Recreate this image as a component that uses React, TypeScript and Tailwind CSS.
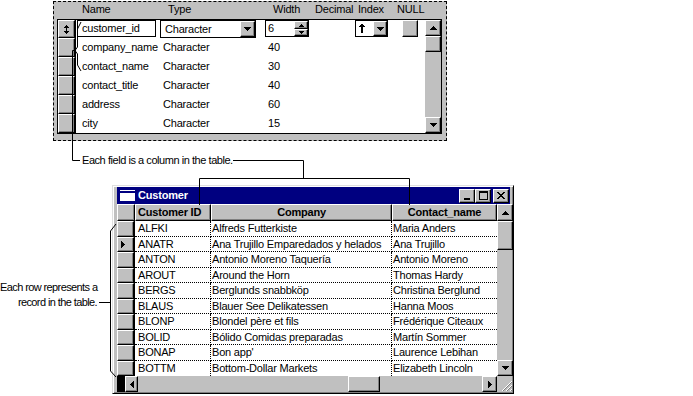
import React from 'react';

const raised =
  'bg-[#c0c0c0] border border-t-white border-l-white border-r-black border-b-black shadow-[inset_-1px_-1px_0_#808080]';

function Btn({ className = '', children }: { className?: string; children?: React.ReactNode }) {
  return <div className={`flex shrink-0 items-center justify-center ${raised} ${className}`}>{children}</div>;
}

type Dir = 'up' | 'down' | 'left' | 'right';

// pixel triangles, win95 style
function Tri({ dir }: { dir: Dir }) {
  if (dir === 'up')
    return (
      <svg width="7" height="4" shapeRendering="crispEdges">
        <path d="M3 0h1v1h1v1h1v1h1v1H0V3h1V2h1V1h1V0z" />
      </svg>
    );
  if (dir === 'down')
    return (
      <svg width="7" height="4" shapeRendering="crispEdges">
        <path d="M0 0h7v1h-1v1h-1v1h-1v1H3V3H2V2H1V1H0z" />
      </svg>
    );
  if (dir === 'right')
    return (
      <svg width="4" height="7" shapeRendering="crispEdges">
        <path d="M0 0h1v1h1v1h1v1h1v1H3v1H2v1H1v1H0z" />
      </svg>
    );
  return (
    <svg width="4" height="7" shapeRendering="crispEdges">
      <path d="M3 0h1v7H3V6H2V5H1V4H0V3h1V2h1V1h1z" />
    </svg>
  );
}

function SmallTri({ dir }: { dir: 'up' | 'down' }) {
  return (
    <svg width="5" height="3" shapeRendering="crispEdges">
      {dir === 'up' ? <path d="M2 0h1v1h1v1h1v1H0V2h1V1h1z" /> : <path d="M0 0h5v1H4v1H3v1H2V2H1V1H0z" />}
    </svg>
  );
}

const fields = [
  { name: 'company_name', width: '40', h: 'h-[19px]' },
  { name: 'contact_name', width: '30', h: 'h-[19px]' },
  { name: 'contact_title', width: '40', h: 'h-[19px]' },
  { name: 'address', width: '60', h: 'h-[19px]' },
  { name: 'city', width: '15', h: 'h-[19px]' },
];

function FieldPanel() {
  return (
    <div className="ml-[53px] mt-px h-[140px] w-[394px] border border-dashed border-black bg-[#c0c0c0]">
      <div className="flex h-[17px] pl-[28px] leading-[14px]">
        <span className="w-[86px]">Name</span>
        <span className="w-[105px]">Type</span>
        <span className="w-[42px]">Width</span>
        <span className="w-[43px]">Decimal</span>
        <span className="w-[39px]">Index</span>
        <span>NULL</span>
      </div>
      <div className="ml-[3px] flex h-[115px] w-[385px] border border-black bg-white">
        {/* row selectors */}
        <div className="flex w-[18px] flex-col border-r border-black bg-[#c0c0c0]">
          <Btn className="h-[18px] w-full">
            <svg width="5" height="9" shapeRendering="crispEdges">
              <path d="M2 0h1v1h1v1h1v1H3v3h2v1H4v1H3v1H2V8H1V7H0V6h2V3H0V2h1V1h1z" />
            </svg>
          </Btn>
          {fields.map((f) => (
            <Btn key={f.name} className={`${f.h} w-full`} />
          ))}
        </div>

        <div className="flex w-[349px] flex-col">
          <div className="flex h-[18px] items-start">
            <div className="w-[84px] pl-px">
              <div className="h-[17px] w-[79px] border border-black pl-[4px] leading-[15px]">customer_id</div>
            </div>
            <div className="w-[105px]">
              <div className="flex h-[18px] w-[96px] border border-black">
                <span className="pl-[4px] leading-[16px]">Character</span>
                <Btn className="ml-auto h-[16px] w-[15px]">
                  <Tri dir="down" />
                </Btn>
              </div>
            </div>
            <div className="w-[49px]">
              <div className="flex h-[17px] w-[44px] border border-black">
                <span className="pl-[2px] leading-[15px]">6</span>
                <div className="ml-auto flex w-[14px] flex-col">
                  <Btn className="h-[8px] w-full">
                    <SmallTri dir="up" />
                  </Btn>
                  <Btn className="h-[7px] w-full">
                    <SmallTri dir="down" />
                  </Btn>
                </div>
              </div>
            </div>
            <div className="w-[41px]" />
            <div className="w-[42px]">
              <div className="flex h-[17px] w-[33px] items-center border border-black">
                <svg className="ml-[3px]" width="6" height="9" shapeRendering="crispEdges">
                  <path d="M2 0h2v1h1v1h1v1H4v6H2V3H0V2h1V1h1z" />
                </svg>
                <Btn className="ml-auto h-[15px] w-[14px]">
                  <Tri dir="down" />
                </Btn>
              </div>
            </div>
            <div className="w-[28px] pl-[5px]">
              <Btn className="h-[17px] w-[16px]" />
            </div>
          </div>
          {fields.map((f) => (
            <div key={f.name} className={`flex ${f.h} items-center`}>
              <span className="w-[84px] pl-[6px]">{f.name}</span>
              <span className="w-[105px] pl-[3px]">Character</span>
              <span className="w-[49px] pl-[3px]">{f.width}</span>
            </div>
          ))}
        </div>

        <div className="flex w-[16px] flex-col bg-[#c0c0c0]">
          <Btn className="h-[16px] w-full">
            <Tri dir="up" />
          </Btn>
          <Btn className="h-[16px] w-full" />
          <div className="flex-1" />
          <Btn className="h-[16px] w-full">
            <Tri dir="down" />
          </Btn>
        </div>
      </div>
    </div>
  );
}

const customers = [
  ['ALFKI', 'Alfreds Futterkiste', 'Maria Anders'],
  ['ANATR', 'Ana Trujillo Emparedados y helados', 'Ana Trujillo'],
  ['ANTON', 'Antonio Moreno Taquería', 'Antonio Moreno'],
  ['AROUT', 'Around the Horn', 'Thomas Hardy'],
  ['BERGS', 'Berglunds snabbköp', 'Christina Berglund'],
  ['BLAUS', 'Blauer See Delikatessen', 'Hanna Moos'],
  ['BLONP', 'Blondel père et fils', 'Frédérique Citeaux'],
  ['BOLID', 'Bólido Comidas preparadas', 'Martín Sommer'],
  ['BONAP', "Bon app'", 'Laurence Lebihan'],
  ['BOTTM', 'Bottom-Dollar Markets', 'Elizabeth Lincoln'],
];

function CustomerWindow() {
  return (
    <div className="flex h-[209px] w-[402px] flex-col border border-t-[#dfdfdf] border-l-[#dfdfdf] border-r-black border-b-black bg-[#c0c0c0] pb-px pl-[4px] pt-px shadow-[inset_1px_1px_0_white,inset_-1px_-1px_0_#808080]">
      {/* title bar */}
      <div className="mr-[3px] flex h-[17px] shrink-0 items-center bg-[#000080]">
        <div className="ml-[3px] h-[11px] w-[15px] bg-white pt-px">
          <div className="h-[2px] bg-[#000080]" />
        </div>
        <span className="ml-[3px] font-bold text-white">Customer</span>
        <div className="ml-auto mr-px flex items-center">
          <Btn className="h-[14px] w-[16px] items-end pb-[2px]">
            <svg width="6" height="2">
              <rect width="6" height="2" />
            </svg>
          </Btn>
          <Btn className="h-[14px] w-[16px]">
            <svg width="9" height="9" shapeRendering="crispEdges">
              <path d="M0 0h9v9H0z M1 2v6h7V2z" fillRule="evenodd" />
            </svg>
          </Btn>
          <Btn className="ml-[2px] h-[14px] w-[16px]">
            <svg width="8" height="7" shapeRendering="crispEdges">
              <path d="M0 0h2v1h1v1h2V1h1V0h2v1H7v1H6v1H5v1h1v1h1v1h1v1H6V6H5V5H3v1H2v1H0V6h1V5h1V4h1V3H2V2H1V1H0z" />
            </svg>
          </Btn>
        </div>
      </div>

      {/* grid */}
      <div className="flex h-[172px] shrink-0">
        <div className="flex flex-1 flex-col">
          <div className="flex h-[17px] font-bold">
            <Btn className="h-full w-[18px] border-r-black" />
            <div className={`${raised} h-full w-[76px] pl-[2px] leading-[15px]`}>Customer ID</div>
            <div className={`${raised} h-full w-[181px] text-center leading-[15px]`}>Company</div>
            <div className={`${raised} h-full w-[105px] text-center leading-[15px]`}>Contact_name</div>
          </div>
          {customers.map(([id, company, contact], i) => {
            const last = i === customers.length - 1;
            return (
              <div key={id} className={`flex ${i % 2 === 0 ? 'h-[16px]' : 'h-[15px]'}`}>
                <div className="flex h-full w-[18px] items-center border-r border-black">
                  <Btn className="h-full w-full justify-start pl-[3px]">{id === 'ANATR' && <Tri dir="right" />}</Btn>
                </div>
                <div
                  className={`flex w-[76px] items-center border-r border-dotted border-black bg-white pl-[3px] ${last ? '' : 'border-b'}`}
                >
                  {id}
                </div>
                <div
                  className={`flex w-[181px] items-center overflow-hidden whitespace-nowrap border-r border-dotted border-black bg-white pl-px ${last ? '' : 'border-b'}`}
                >
                  {company}
                </div>
                <div
                  className={`flex w-[105px] items-center whitespace-nowrap border-dotted border-black bg-white pl-px ${last ? '' : 'border-b'}`}
                >
                  {contact}
                </div>
              </div>
            );
          })}
        </div>
        <div className="flex w-[16px] flex-col">
          <Btn className="h-[17px] w-full">
            <Tri dir="up" />
          </Btn>
          <Btn className="h-[29px] w-full" />
          <div className="flex-1" />
          <Btn className="h-[16px] w-full">
            <Tri dir="down" />
          </Btn>
        </div>
      </div>

      {/* horizontal scrollbar */}
      <div className="flex h-[16px] shrink-0">
        <div className="w-[8px] bg-black" />
        <Btn className="h-full w-[13px]">
          <Tri dir="left" />
        </Btn>
        <div className="flex flex-1">
          <Btn className="ml-[210px] h-full w-[32px]" />
        </div>
        <Btn className="h-full w-[15px]">
          <Tri dir="right" />
        </Btn>
        <div className="flex w-[16px] items-end justify-end">
          <svg width="12" height="12" shapeRendering="crispEdges">
            <path d="M11 1L1 11 M11 5L5 11 M11 9L9 11" stroke="white" />
            <path d="M11 2L2 11 M11 6L6 11 M11 10L10 11" stroke="#808080" />
          </svg>
        </div>
      </div>
    </div>
  );
}

export default function App() {
  return (
    <div className="relative h-[396px] w-[693px] overflow-hidden bg-white font-['Liberation_Sans',Arial,sans-serif] text-[11px] tracking-[-0.2px] text-black">
      <FieldPanel />

      <div className="h-[44px] whitespace-nowrap pl-[82px] pt-[12px] leading-[14px] tracking-[-0.45px]">
        Each field is a column in the table.
      </div>

      <div className="flex">
        <div className="w-[112px] whitespace-nowrap pt-[95px] text-right leading-[15px] tracking-[-0.6px]">
          <div className="pr-[19px]">Each row represents a</div>
          <div className="pr-[15px]">record in the table.</div>
        </div>
        <CustomerWindow />
      </div>

      {/* callout leader lines */}
      <svg className="pointer-events-none absolute left-0 top-0" width="693" height="396" fill="none" stroke="black">
        <path d="M81 22 L77.5 29 V47 L75 50.5 L77.5 54 V65 L81 71" />
        <path d="M75 50.5 H72.5 V160.5 H80" />
        <path d="M233 160.5 H303.5 V178.5" />
        <path d="M199.5 205 V178.5 H409.5 V205" />
        <path d="M116 224 L110.5 231 V371 L116 377" />
        <path d="M99 302.5 H110" />
      </svg>
    </div>
  );
}
